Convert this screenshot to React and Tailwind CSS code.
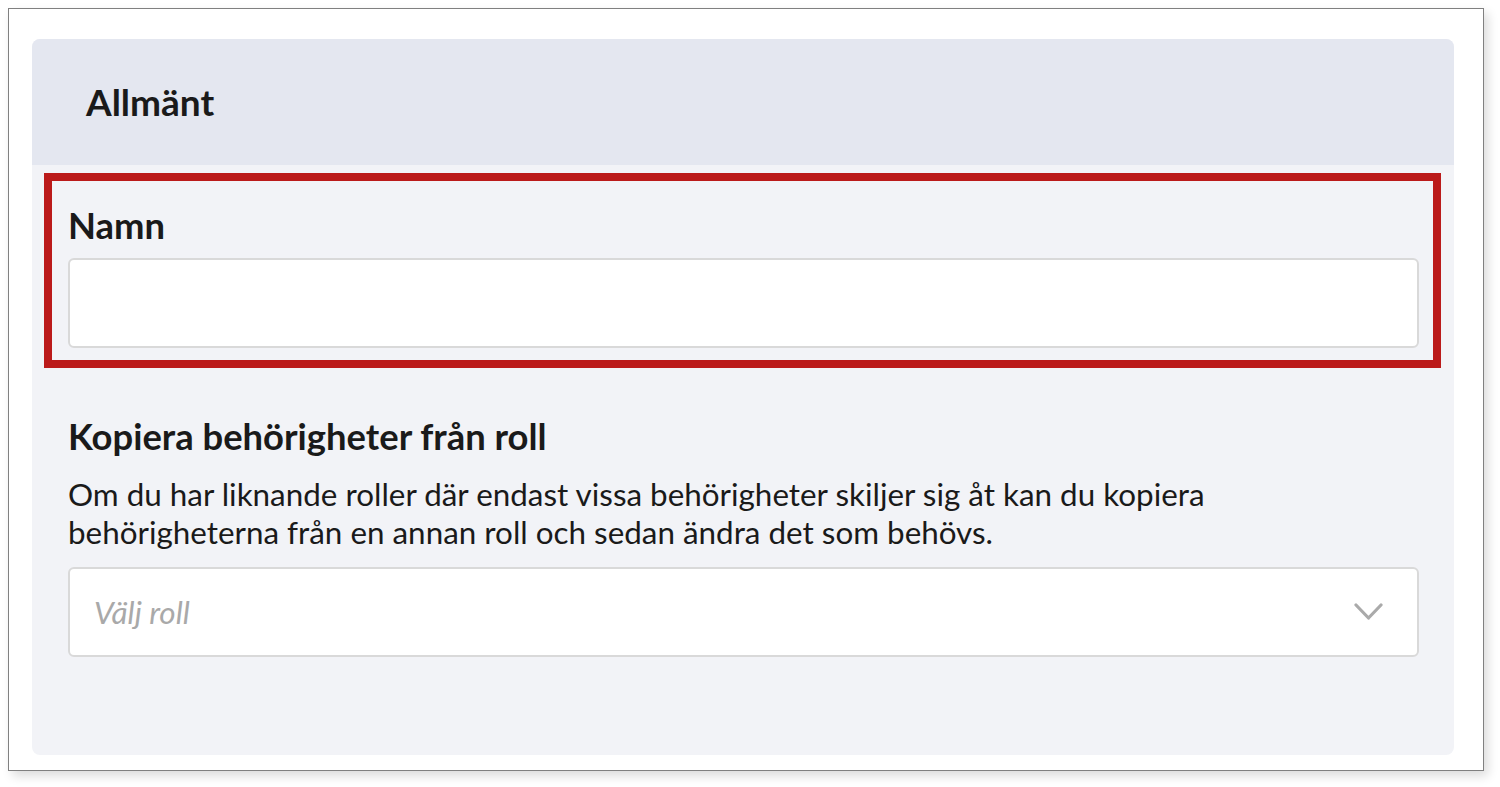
import React from "react";

export default function App() {
  return (
    <div className="w-[1500px] h-[787px] bg-white pt-[8px] pl-[8px]" style={{ fontFamily: "Lato, 'Noto Sans', sans-serif" }}>
      <div className="w-[1476px] h-[763px] border border-[#808080] bg-white shadow-[4px_5px_10px_rgba(0,0,0,0.14)] pt-[30px] pl-[23px]">
        <div className="w-[1422px] h-[716px] rounded-[8px] bg-[#f2f3f7] overflow-hidden">
          <div className="h-[126px] bg-[#e4e7f0] flex items-center pl-[54px]">
            <h2 className="text-[37px] leading-[1.2] font-bold text-[#1a1a1a]">Allmänt</h2>
          </div>

          <div className="pl-[36px] pr-[35px] pt-[39px]">
            <div className="relative">
              <div className="absolute -left-[24px] -right-[22px] -top-[31px] -bottom-[20px] border-[8px] border-[#bb1a1a] pointer-events-none" />
              <label className="block text-[36.4px] leading-[1.2] font-bold text-[#1a1a1a]">Namn</label>
              <div className="mt-[10px] h-[90px] rounded-[6px] border-2 border-[#d9d9d9] bg-white" />
            </div>

            <h3 className="mt-[67px] text-[36.4px] leading-[1.2] font-bold text-[#1a1a1a]">Kopiera behörigheter från roll</h3>
            <p className="mt-[17px] text-[31.4px] leading-[38px] text-[#1a1a1a]">
              Om du har liknande roller där endast vissa behörigheter skiljer sig åt kan du kopiera
              <br />
              behörigheterna från en annan roll och sedan ändra det som behövs.
            </p>

            <div className="mt-[16px] h-[90px] rounded-[6px] border-2 border-[#d9d9d9] bg-white flex items-center justify-between pl-[24px] pr-[34px]">
              <span className="text-[31.4px] italic text-[#a9a9a9]">Välj roll</span>
              <svg width="29" height="18" viewBox="0 0 29 18" fill="none">
                <path d="M2 2 L14.5 15 L27 2" stroke="#aaaaaa" strokeWidth="3.2" strokeLinecap="round" strokeLinejoin="round" />
              </svg>
            </div>
          </div>
        </div>
      </div>
    </div>
  );
}
